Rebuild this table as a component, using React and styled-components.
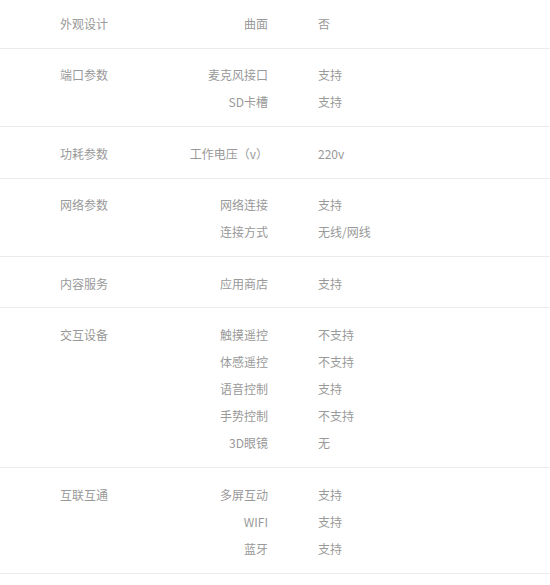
import React from "react";
import styled, { createGlobalStyle } from "styled-components";

const GlobalStyle = createGlobalStyle`
  html, body {
    margin: 0;
    padding: 0;
    background: #fff;
  }
  body {
    font-family: "Noto Sans CJK SC", "Noto Sans", sans-serif;
    font-size: 12px;
    color: #999;
  }
`;

const Table = styled.div`
  width: 550px;
  display: flex;
  flex-direction: column;
`;

const Group = styled.section`
  display: grid;
  grid-template-columns: 50px 108px 1fr;
  column-gap: 50px;
  padding: 12.7px 0 10.6px 60px;
  border-bottom: 1px solid #ebebeb;
  line-height: 27.1px;

  &:first-child {
    padding-top: 10px;
  }
`;

const Category = styled.div`
  grid-column: 1;
  grid-row: 1 / span ${(p) => p.$rows};
  white-space: nowrap;
  color: #999;
`;

const Key = styled.div`
  grid-column: 2;
  text-align: right;
  white-space: nowrap;
  color: #999;
`;

const Value = styled.div`
  grid-column: 3;
  white-space: nowrap;
  color: #999;
`;

const data = [
  { name: "外观设计", items: [["曲面", "否"]] },
  { name: "端口参数", items: [["麦克风接口", "支持"], ["SD卡槽", "支持"]] },
  { name: "功耗参数", items: [["工作电压（v）", "220v"]] },
  { name: "网络参数", items: [["网络连接", "支持"], ["连接方式", "无线/网线"]] },
  { name: "内容服务", items: [["应用商店", "支持"]] },
  {
    name: "交互设备",
    items: [
      ["触摸遥控", "不支持"],
      ["体感遥控", "不支持"],
      ["语音控制", "支持"],
      ["手势控制", "不支持"],
      ["3D眼镜", "无"],
    ],
  },
  { name: "互联互通", items: [["多屏互动", "支持"], ["WIFI", "支持"], ["蓝牙", "支持"]] },
];

export default function App() {
  return (
    <>
      <GlobalStyle />
      <Table>
        {data.map((g) => (
          <Group key={g.name}>
            <Category $rows={g.items.length}>{g.name}</Category>
            {g.items.map(([k, v]) => (
              <React.Fragment key={k}>
                <Key>{k}</Key>
                <Value>{v}</Value>
              </React.Fragment>
            ))}
          </Group>
        ))}
      </Table>
    </>
  );
}
